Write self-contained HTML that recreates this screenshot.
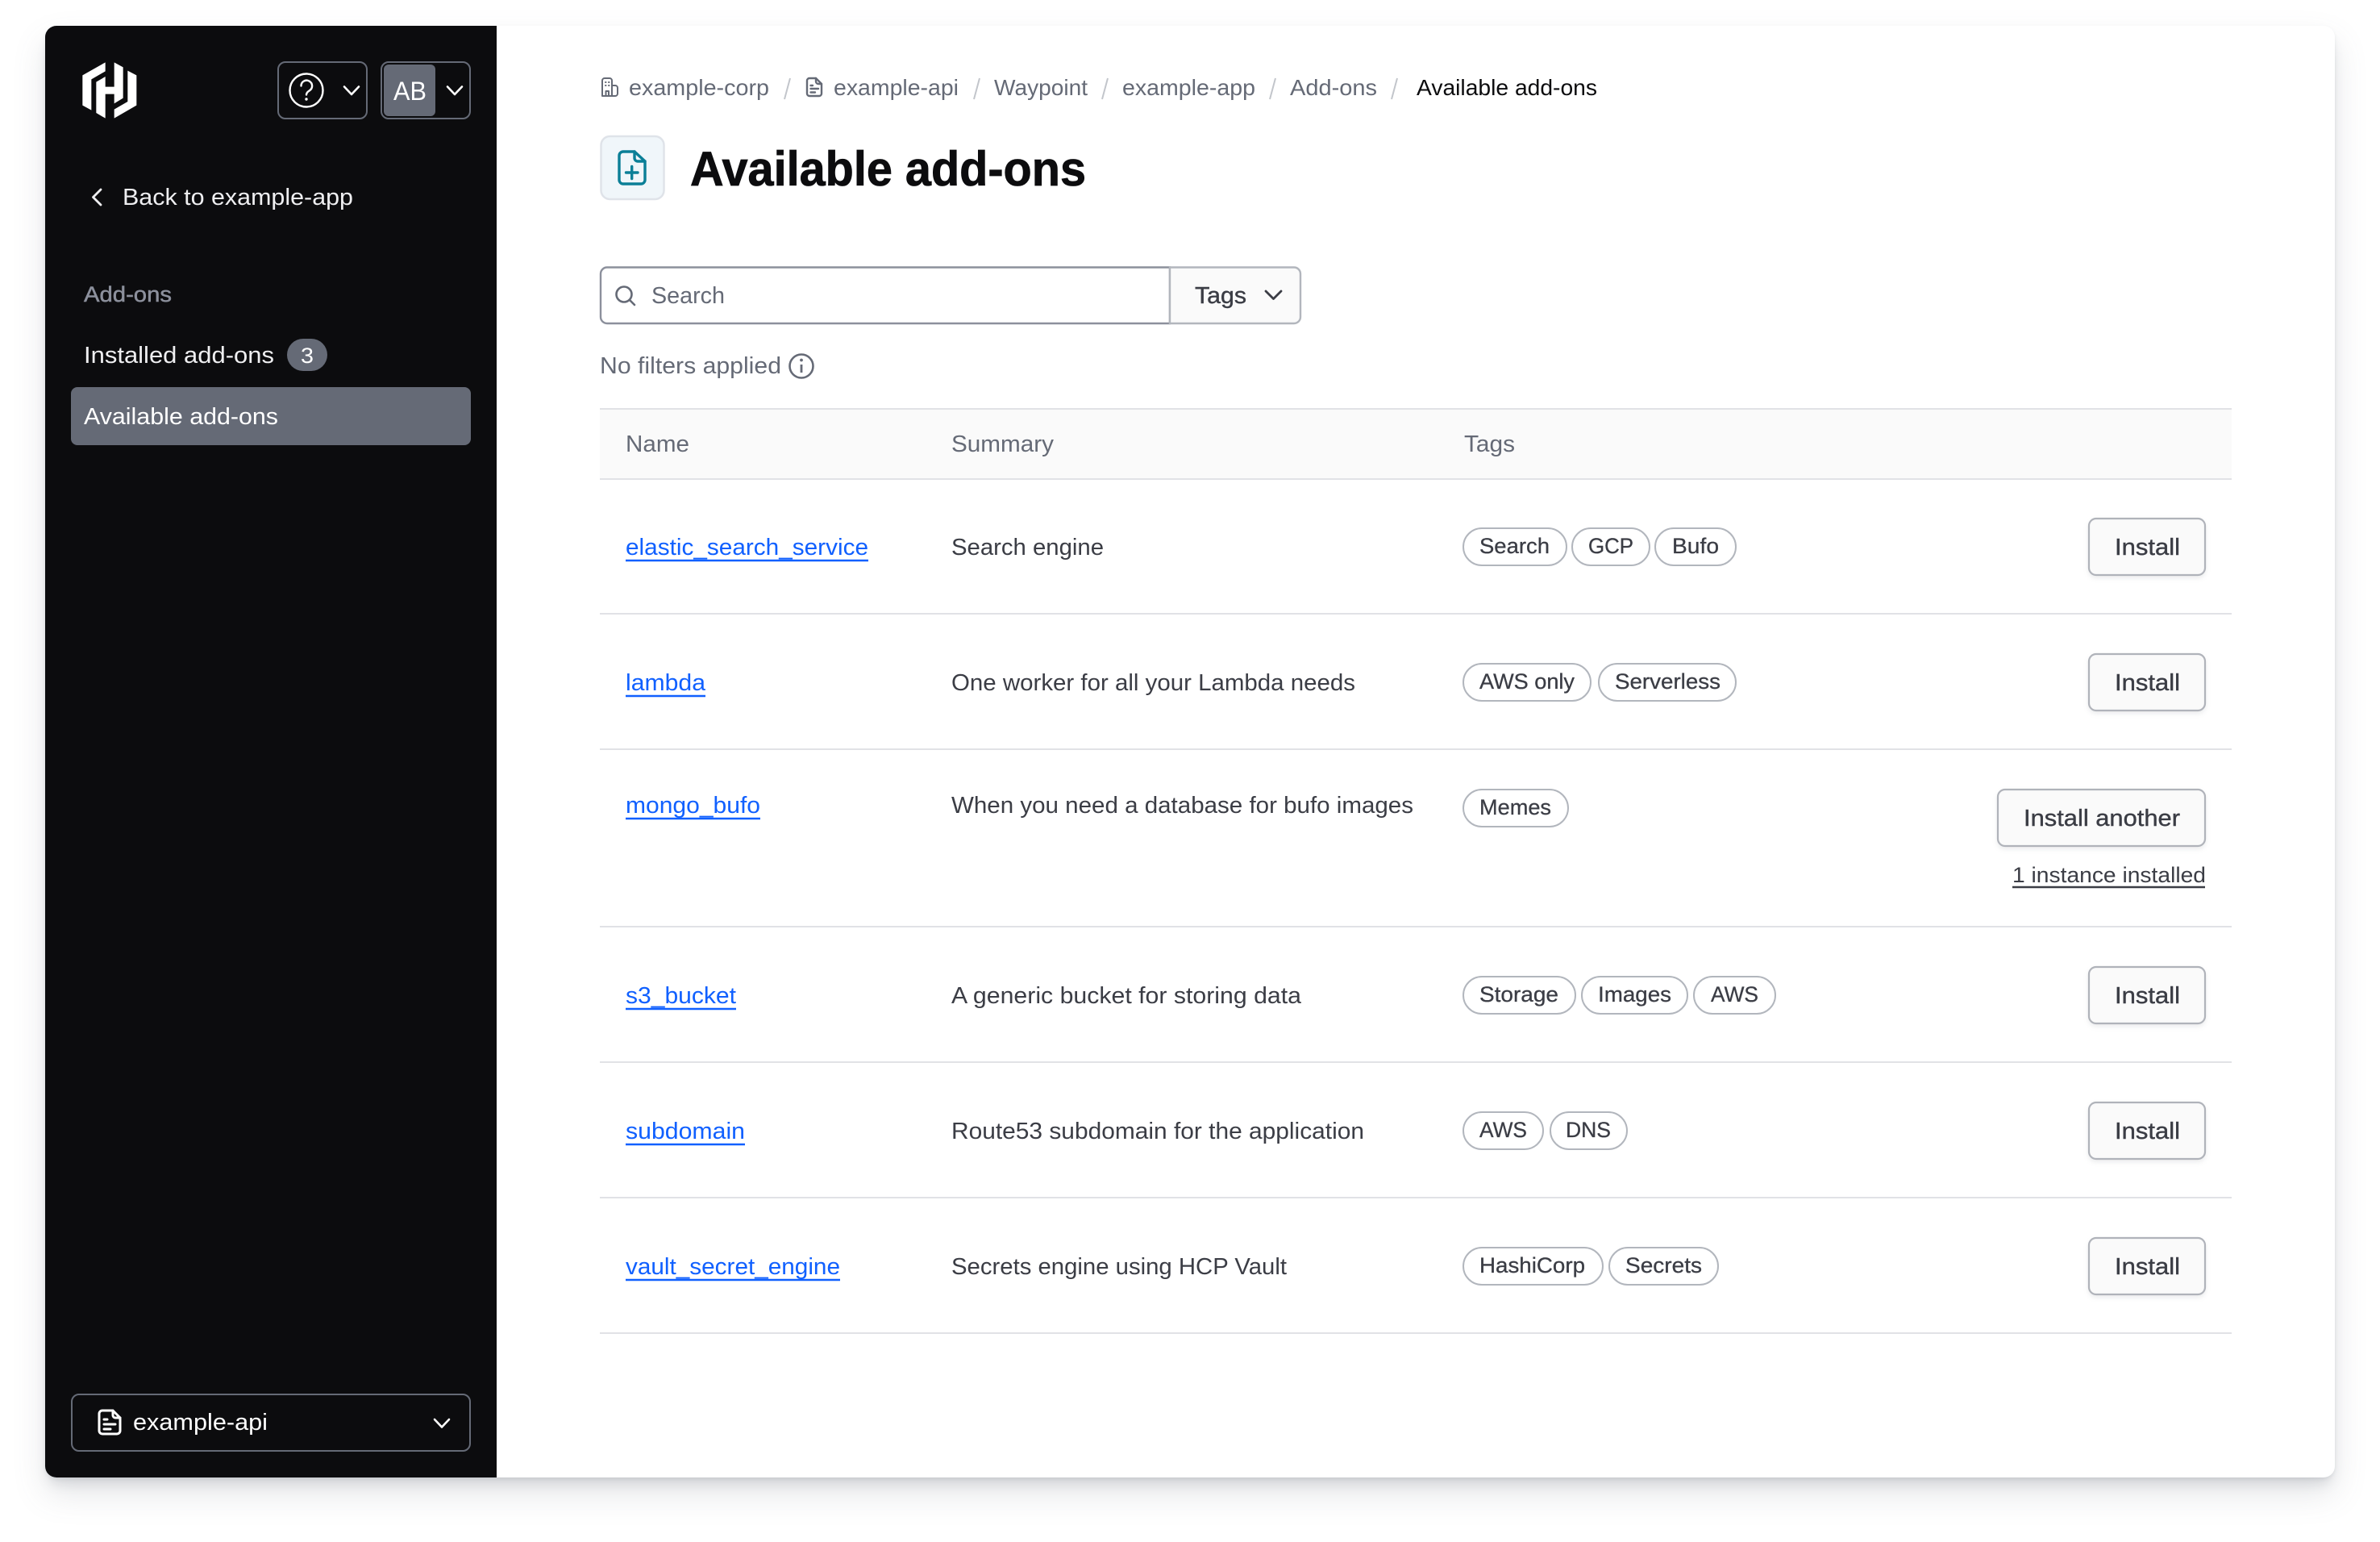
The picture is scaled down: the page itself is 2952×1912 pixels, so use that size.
<!DOCTYPE html>
<html lang="en"><head><meta charset="utf-8"><title>Available add-ons</title>
<style>
html,body{margin:0;padding:0;background:#fff;width:2952px;height:1912px;overflow:hidden}
#card{position:absolute;left:56px;top:32px;width:2840px;height:1800px;border-radius:14px;background:#fff;box-shadow:0 2px 4px rgba(101,106,118,.1),0 12px 16px -6px rgba(101,106,118,.2),0 20px 40px rgba(101,106,118,.17)}
svg{position:absolute;left:0;top:0}
text{font-family:"Liberation Sans",Arial,sans-serif;font-size:29px;fill:#3b3d45;white-space:pre}
.g{fill:#656a76}.w{fill:#efeff1}.l{fill:#1060ff}.t{font-size:27px;stroke:#3b3d45;stroke-width:.3px}
.m{stroke:#3b3d45;stroke-width:.4px}
.p{fill:#fff;stroke:#b2b6bd;stroke-width:2}
.b{fill:#fafafa;stroke:#b0b3ba;stroke-width:2.200;filter:drop-shadow(0 3px 3px rgba(101,106,118,.12))}
.sep{stroke:#e1e2e6;stroke-width:2}
.ul{stroke:#1060ff;stroke-width:2.600}
.ic{fill:none;stroke-linecap:round;stroke-linejoin:round}
</style></head><body>
<div id="card"></div>
<svg width="2952" height="1912" viewBox="0 0 2952 1912" xmlns="http://www.w3.org/2000/svg">
<path d="M70 32H616V1832H70a14 14 0 0 1-14-14V46a14 14 0 0 1 14-14Z" fill="#0c0c0e"/>
<g transform="translate(90 65) scale(.33333)" fill="#fff">
<path d="M37 85 122 37V70L70 100V215L37 197Z"/>
<path d="M88 110 122 90V128H155V37L188 55V170L155 190V155H122V245L88 225Z"/>
<path d="M205 68 238 85V197L155 245V212L205 183Z"/>
</g>
<rect x="345" y="77" width="110" height="70" rx="9" fill="none" stroke="#656a76" stroke-width="2"/>
<circle cx="380" cy="112" r="20.5" fill="none" stroke="#fff" stroke-width="2.4"/>
<path class="ic" d="M373.500 106.500a6.800 6.800 0 1 1 10.500 5.700c-2.400 1.500-4 2.800-4 5.300" stroke="#fff" stroke-width="2.400"/>
<circle cx="380" cy="123" r="1.700" fill="#fff"/>
<path class="ic" d="M427 107.500 436 117 445 107.500" stroke="#fff" stroke-width="2.600"/>
<rect x="473" y="77" width="110" height="70" rx="9" fill="none" stroke="#656a76" stroke-width="2"/>
<rect x="476" y="80" width="64" height="64" rx="6" fill="#656a76"/>
<text x="488" y="124" textLength="41" lengthAdjust="spacingAndGlyphs" style="font-size:32px;fill:#fff">AB</text>
<path class="ic" d="M555 107.500 564 117 573 107.500" stroke="#fff" stroke-width="2.600"/>
<path class="ic" d="M125 235 115.500 244.500 125 254" stroke="#efeff1" stroke-width="2.800"/>
<text class="w" x="152" y="254" textLength="286" lengthAdjust="spacingAndGlyphs">Back to example-app</text>
<text x="104" y="374" textLength="109" lengthAdjust="spacingAndGlyphs" style="font-size:27px;fill:#8c909c;stroke:#8c909c;stroke-width:.5px">Add-ons</text>
<text class="w" x="104" y="450" textLength="236" lengthAdjust="spacingAndGlyphs">Installed add-ons</text>
<rect x="356" y="420" width="50" height="40" rx="20" fill="#656a76"/>
<text x="373" y="450" textLength="16" lengthAdjust="spacingAndGlyphs" style="fill:#fff;font-size:27px">3</text>
<rect x="88" y="480" width="496" height="72" rx="8" fill="#656a76"/>
<text x="104" y="526" textLength="241" lengthAdjust="spacingAndGlyphs" style="fill:#fff">Available add-ons</text>
<rect x="89" y="1729" width="494" height="70" rx="9" fill="none" stroke="#656a76" stroke-width="2"/>
<g class="ic" stroke="#fff" stroke-width="3">
<path d="M140 1749H127a4 4 0 0 0-4 4V1774a4 4 0 0 0 4 4H145a4 4 0 0 0 4-4V1758Z"/>
<path d="M140 1749V1755a3 3 0 0 0 3 3H149M129 1760H133M129 1766H143M129 1772H137"/>
</g>
<text x="165" y="1773" textLength="167" lengthAdjust="spacingAndGlyphs" style="fill:#fff">example-api</text>
<path class="ic" d="M539 1760 548 1769.500 557 1760" stroke="#fff" stroke-width="2.600"/>

<g class="ic" stroke="#656a76" stroke-width="2">
<path d="M747 119V100a3 3 0 0 1 3-3H756a3 3 0 0 1 3 3V119M759 106H763a3 3 0 0 1 3 3V116a3 3 0 0 1-3 3H747M751.500 119V113H755V119M751 102H751.500M755 102H755.500M751 106H751.500M755 106H755.500"/>
</g>
<text class="g" x="780" y="118" textLength="174" lengthAdjust="spacingAndGlyphs" style="font-size:28px">example-corp</text>
<path d="M973 123 980 97" stroke="#c2c5cb" stroke-width="2"/>
<g class="ic" stroke="#656a76" stroke-width="2.400">
<path d="M1012 97H1004a3 3 0 0 0-3 3V116a3 3 0 0 0 3 3H1016a3 3 0 0 0 3-3V104Z"/>
<path d="M1012 97V101a3 3 0 0 0 3 3H1019M1005.500 106H1008M1005.500 110H1015M1005.500 114.500H1011"/>
</g>
<text class="g" x="1034" y="118" textLength="155" lengthAdjust="spacingAndGlyphs" style="font-size:28px">example-api</text>
<path d="M1208 123 1215 97" stroke="#c2c5cb" stroke-width="2"/>
<text class="g" x="1233" y="118" textLength="116" lengthAdjust="spacingAndGlyphs" style="font-size:28px">Waypoint</text>
<path d="M1367 123 1374 97" stroke="#c2c5cb" stroke-width="2"/>
<text class="g" x="1392" y="118" textLength="165" lengthAdjust="spacingAndGlyphs" style="font-size:28px">example-app</text>
<path d="M1575 123 1582 97" stroke="#c2c5cb" stroke-width="2"/>
<text class="g" x="1600" y="118" textLength="108" lengthAdjust="spacingAndGlyphs" style="font-size:28px">Add-ons</text>
<path d="M1726 123 1733 97" stroke="#c2c5cb" stroke-width="2"/>
<text x="1757" y="118" textLength="224" lengthAdjust="spacingAndGlyphs" style="font-size:28px;fill:#0c0c0e">Available add-ons</text>

<rect x="745.500" y="169" width="78" height="78" rx="11" fill="#f0f6fa" stroke="#dfe3e9" stroke-width="2.500"/>
<g class="ic" stroke="#0b7f97" stroke-width="3.400">
<path d="M787 188H773a5 5 0 0 0-5 5V223a5 5 0 0 0 5 5H795a5 5 0 0 0 5-5V200Z"/>
<path d="M787 188V196a4 4 0 0 0 4 4H800M776.500 214H791M783.700 206.500V221.500"/>
</g>
<text x="856" y="230" textLength="491" lengthAdjust="spacingAndGlyphs" style="font-size:60px;font-weight:bold;fill:#0c0c0e;stroke:#0c0c0e;stroke-width:.8px">Available add-ons</text>

<path d="M1451 331.500H753a8 8 0 0 0-8 8V393a8 8 0 0 0 8 8H1451Z" fill="#fff" stroke="#8c909c" stroke-width="2.400"/>
<circle cx="774" cy="365" r="9.500" fill="none" stroke="#656a76" stroke-width="2.600"/>
<path class="ic" d="M781 372 787 378" stroke="#656a76" stroke-width="2.600"/>
<text class="g" x="808" y="376" textLength="91" lengthAdjust="spacingAndGlyphs">Search</text>
<path d="M1451 331.500H1605a8 8 0 0 1 8 8V393a8 8 0 0 1-8 8H1451Z" fill="#fafafa" stroke="#b2b6bd" stroke-width="2.400"/>
<text class="m" x="1482" y="376" textLength="64" lengthAdjust="spacingAndGlyphs">Tags</text>
<path class="ic" d="M1570 361 1579.500 370.500 1589 361" stroke="#3b3d45" stroke-width="2.800"/>
<text class="g" x="744" y="463" textLength="225" lengthAdjust="spacingAndGlyphs">No filters applied</text>
<circle cx="994" cy="454" r="14.500" fill="none" stroke="#656a76" stroke-width="2.600"/>
<path d="M994 452V462" stroke="#656a76" stroke-width="2.800"/><circle cx="994" cy="446.500" r="1.900" fill="#656a76"/>

<rect x="744" y="507" width="2024" height="86" fill="#fafafa"/>
<line class="sep" x1="744" x2="2768" y1="507" y2="507"/>
<line class="sep" x1="744" x2="2768" y1="594" y2="594"/>
<text class="g" x="776" y="560" textLength="79" lengthAdjust="spacingAndGlyphs">Name</text>
<text class="g" x="1180" y="560" textLength="127" lengthAdjust="spacingAndGlyphs">Summary</text>
<text class="g" x="1816" y="560" textLength="63" lengthAdjust="spacingAndGlyphs">Tags</text>

<line class="sep" x1="744" x2="2768" y1="761" y2="761"/>
<line class="sep" x1="744" x2="2768" y1="929" y2="929"/>
<line class="sep" x1="744" x2="2768" y1="1149" y2="1149"/>
<line class="sep" x1="744" x2="2768" y1="1317" y2="1317"/>
<line class="sep" x1="744" x2="2768" y1="1485" y2="1485"/>
<line class="sep" x1="744" x2="2768" y1="1653" y2="1653"/>

<!-- row 1 -->
<text class="l" x="776" y="688" textLength="301" lengthAdjust="spacingAndGlyphs">elastic_search_service</text>
<line class="ul" x1="776" x2="1077" y1="695" y2="695"/>
<text x="1180" y="688" textLength="189" lengthAdjust="spacingAndGlyphs">Search engine</text>
<rect class="p" x="1815" y="655" width="128" height="46" rx="23"/><text class="t" x="1835" y="686" textLength="87" lengthAdjust="spacingAndGlyphs">Search</text>
<rect class="p" x="1950" y="655" width="96" height="46" rx="23"/><text class="t" x="1970" y="686" textLength="56" lengthAdjust="spacingAndGlyphs">GCP</text>
<rect class="p" x="2053" y="655" width="100" height="46" rx="23"/><text class="t" x="2074" y="686" textLength="58" lengthAdjust="spacingAndGlyphs">Bufo</text>
<rect class="b" x="2591" y="643" width="144" height="70" rx="9"/><text class="m" x="2623" y="688" textLength="81" lengthAdjust="spacingAndGlyphs">Install</text>

<!-- row 2 -->
<text class="l" x="776" y="856" textLength="99" lengthAdjust="spacingAndGlyphs">lambda</text>
<line class="ul" x1="776" x2="875" y1="863" y2="863"/>
<text x="1180" y="856" textLength="501" lengthAdjust="spacingAndGlyphs">One worker for all your Lambda needs</text>
<rect class="p" x="1815" y="823" width="158" height="46" rx="23"/><text class="t" x="1835" y="854" textLength="118" lengthAdjust="spacingAndGlyphs">AWS only</text>
<rect class="p" x="1983" y="823" width="170" height="46" rx="23"/><text class="t" x="2003" y="854" textLength="131" lengthAdjust="spacingAndGlyphs">Serverless</text>
<rect class="b" x="2591" y="811" width="144" height="70" rx="9"/><text class="m" x="2623" y="856" textLength="81" lengthAdjust="spacingAndGlyphs">Install</text>

<!-- row 3 -->
<text class="l" x="776" y="1008" textLength="167" lengthAdjust="spacingAndGlyphs">mongo_bufo</text>
<line class="ul" x1="776" x2="943" y1="1015" y2="1015"/>
<text x="1180" y="1008" textLength="573" lengthAdjust="spacingAndGlyphs">When you need a database for bufo images</text>
<rect class="p" x="1815" y="979" width="130" height="46" rx="23"/><text class="t" x="1835" y="1010" textLength="89" lengthAdjust="spacingAndGlyphs">Memes</text>
<rect class="b" x="2478" y="979" width="257" height="70" rx="9"/><text class="m" x="2510" y="1024" textLength="194" lengthAdjust="spacingAndGlyphs">Install another</text>
<text x="2496" y="1094" textLength="240" lengthAdjust="spacingAndGlyphs" style="font-size:27px">1 instance installed</text>
<line x1="2496" x2="2735" y1="1100" y2="1100" stroke="#3b3d45" stroke-width="2.400"/>

<!-- row 4 -->
<text class="l" x="776" y="1244" textLength="137" lengthAdjust="spacingAndGlyphs">s3_bucket</text>
<line class="ul" x1="776" x2="913" y1="1251" y2="1251"/>
<text x="1180" y="1244" textLength="434" lengthAdjust="spacingAndGlyphs">A generic bucket for storing data</text>
<rect class="p" x="1815" y="1211" width="139" height="46" rx="23"/><text class="t" x="1835" y="1242" textLength="98" lengthAdjust="spacingAndGlyphs">Storage</text>
<rect class="p" x="1962" y="1211" width="131" height="46" rx="23"/><text class="t" x="1982" y="1242" textLength="91" lengthAdjust="spacingAndGlyphs">Images</text>
<rect class="p" x="2101" y="1211" width="101" height="46" rx="23"/><text class="t" x="2122" y="1242" textLength="59" lengthAdjust="spacingAndGlyphs">AWS</text>
<rect class="b" x="2591" y="1199" width="144" height="70" rx="9"/><text class="m" x="2623" y="1244" textLength="81" lengthAdjust="spacingAndGlyphs">Install</text>

<!-- row 5 -->
<text class="l" x="776" y="1412" textLength="148" lengthAdjust="spacingAndGlyphs">subdomain</text>
<line class="ul" x1="776" x2="924" y1="1419" y2="1419"/>
<text x="1180" y="1412" textLength="512" lengthAdjust="spacingAndGlyphs">Route53 subdomain for the application</text>
<rect class="p" x="1815" y="1379" width="99" height="46" rx="23"/><text class="t" x="1835" y="1410" textLength="59" lengthAdjust="spacingAndGlyphs">AWS</text>
<rect class="p" x="1923" y="1379" width="95" height="46" rx="23"/><text class="t" x="1942" y="1410" textLength="56" lengthAdjust="spacingAndGlyphs">DNS</text>
<rect class="b" x="2591" y="1367" width="144" height="70" rx="9"/><text class="m" x="2623" y="1412" textLength="81" lengthAdjust="spacingAndGlyphs">Install</text>

<!-- row 6 -->
<text class="l" x="776" y="1580" textLength="266" lengthAdjust="spacingAndGlyphs">vault_secret_engine</text>
<line class="ul" x1="776" x2="1042" y1="1587" y2="1587"/>
<text x="1180" y="1580" textLength="416" lengthAdjust="spacingAndGlyphs">Secrets engine using HCP Vault</text>
<rect class="p" x="1815" y="1547" width="173" height="46" rx="23"/><text class="t" x="1835" y="1578" textLength="131" lengthAdjust="spacingAndGlyphs">HashiCorp</text>
<rect class="p" x="1996" y="1547" width="135" height="46" rx="23"/><text class="t" x="2016" y="1578" textLength="95" lengthAdjust="spacingAndGlyphs">Secrets</text>
<rect class="b" x="2591" y="1535" width="144" height="70" rx="9"/><text class="m" x="2623" y="1580" textLength="81" lengthAdjust="spacingAndGlyphs">Install</text>
</svg>
</body></html>
